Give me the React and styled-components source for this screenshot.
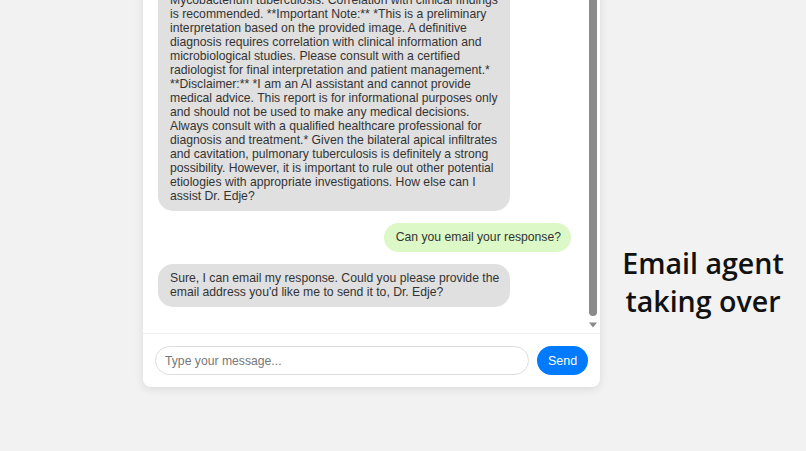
import React, { useLayoutEffect, useRef } from "react";
import styled, { createGlobalStyle } from "styled-components";

const GlobalStyle = createGlobalStyle`
  html, body {
    margin: 0;
    padding: 0;
    background: #f2f2f2;
    overflow: hidden;
  }
  body {
    font-family: "Liberation Sans", Arial, sans-serif;
  }
`;

const Page = styled.div`
  height: 451px;
  box-sizing: border-box;
  padding: 0 0 64px 143px;
  display: flex;
  align-items: flex-end;
  overflow: hidden;
`;

const ChatBox = styled.div`
  width: 457px;
  height: 440px;
  flex-shrink: 0;
  background: #fff;
  border-radius: 8px;
  box-shadow: 0 2px 10px rgba(0, 0, 0, 0.1);
  display: flex;
  flex-direction: column;
  overflow: hidden;
`;

const MessagesArea = styled.div`
  flex: 1;
  min-height: 0;
  display: flex;
`;

const Messages = styled.div`
  flex: 1;
  overflow-y: auto;
  scrollbar-width: none;
  padding: 15px 17px 26px 15px;
  display: flex;
  flex-direction: column;
  gap: 12px;

  &::-webkit-scrollbar {
    display: none;
  }
`;

const ScrollBar = styled.div`
  width: 12px;
  flex-shrink: 0;
  display: flex;
  flex-direction: column;
  justify-content: flex-end;
  padding-left: 1px;
  box-sizing: border-box;
  overflow: hidden;
`;

const Thumb = styled.div`
  width: 8px;
  height: 360px;
  flex-shrink: 0;
  background: #8a8a8a;
  border-radius: 0 0 4px 4px;
`;

const ArrowButton = styled.div`
  height: 17px;
  width: 8px;
  flex-shrink: 0;
  display: flex;
  align-items: center;
  justify-content: center;
`;

const Bubble = styled.div`
  max-width: 352px;
  box-sizing: border-box;
  padding: 7px 10px 8px 12px;
  border-radius: 15px;
  font-size: 12.2px;
  line-height: 14px;
  color: #333;
  align-self: ${(p) => (p.$user ? "flex-end" : "flex-start")};
  background: ${(p) => (p.$user ? "#dcf8c6" : "#e0e0e0")};
`;

const InputRow = styled.div`
  display: flex;
  gap: 8px;
  padding: 12px;
  border-top: 1px solid #eee;
`;

const TextInput = styled.input`
  flex: 1;
  height: 29px;
  box-sizing: border-box;
  border: 1px solid #ddd;
  border-radius: 15px;
  padding: 0 9px;
  font-family: "Liberation Sans", Arial, sans-serif;
  font-size: 12.2px;
  color: #333;
  outline: none;

  &::placeholder {
    color: #777;
  }
`;

const SendButton = styled.button`
  width: 51px;
  height: 29px;
  padding: 0;
  border: none;
  border-radius: 15px;
  background: #007bff;
  color: #fff;
  font-family: "Liberation Sans", Arial, sans-serif;
  font-size: 12.5px;
  cursor: pointer;
`;

const Caption = styled.div`
  flex: 1;
  align-self: flex-end;
  margin-bottom: 67px;
  text-align: center;
  font-family: "Open Sans", "Noto Sans", sans-serif;
  font-weight: 600;
  font-size: 28.6px;
  line-height: 38px;
  color: #111;
`;

const messages = [
  {
    user: true,
    text: "Please review this chest X-ray and give me your interpretation.",
  },
  {
    user: false,
    text:
      "**Chest X-ray Interpretation** **Findings:** There are patchy opacities in both upper lobes with areas of cavitation. No pleural effusion or pneumothorax is seen. The heart size is within normal limits. **Impression:** The findings are highly suggestive of active pulmonary tuberculosis. Further evaluation with sputum smear microscopy and culture for Mycobacterium tuberculosis. Correlation with clinical findings is recommended. **Important Note:** *This is a preliminary interpretation based on the provided image. A definitive diagnosis requires correlation with clinical information and microbiological studies. Please consult with a certified radiologist for final interpretation and patient management.* **Disclaimer:** *I am an AI assistant and cannot provide medical advice. This report is for informational purposes only and should not be used to make any medical decisions. Always consult with a qualified healthcare professional for diagnosis and treatment.* Given the bilateral apical infiltrates and cavitation, pulmonary tuberculosis is definitely a strong possibility. However, it is important to rule out other potential etiologies with appropriate investigations. How else can I assist Dr. Edje?",
  },
  { user: true, text: "Can you email your response?" },
  {
    user: false,
    text:
      "Sure, I can email my response. Could you please provide the email address you'd like me to send it to, Dr. Edje?",
  },
];

export default function App() {
  const listRef = useRef(null);

  useLayoutEffect(() => {
    const el = listRef.current;
    if (el) el.scrollTop = el.scrollHeight;
  }, []);

  return (
    <>
      <GlobalStyle />
      <Page>
        <ChatBox>
          <MessagesArea>
            <Messages ref={listRef}>
              {messages.map((m, i) => (
                <Bubble key={i} $user={m.user}>
                  {m.text}
                </Bubble>
              ))}
            </Messages>
            <ScrollBar>
              <Thumb />
              <ArrowButton>
                <svg width="8" height="6" viewBox="0 0 8 6">
                  <path d="M0 0.5 H8 L4 5.5 Z" fill="#8a8a8a" />
                </svg>
              </ArrowButton>
            </ScrollBar>
          </MessagesArea>
          <InputRow>
            <TextInput placeholder="Type your message..." />
            <SendButton>Send</SendButton>
          </InputRow>
        </ChatBox>
        <Caption>
          Email agent
          <br />
          taking over
        </Caption>
      </Page>
    </>
  );
}
